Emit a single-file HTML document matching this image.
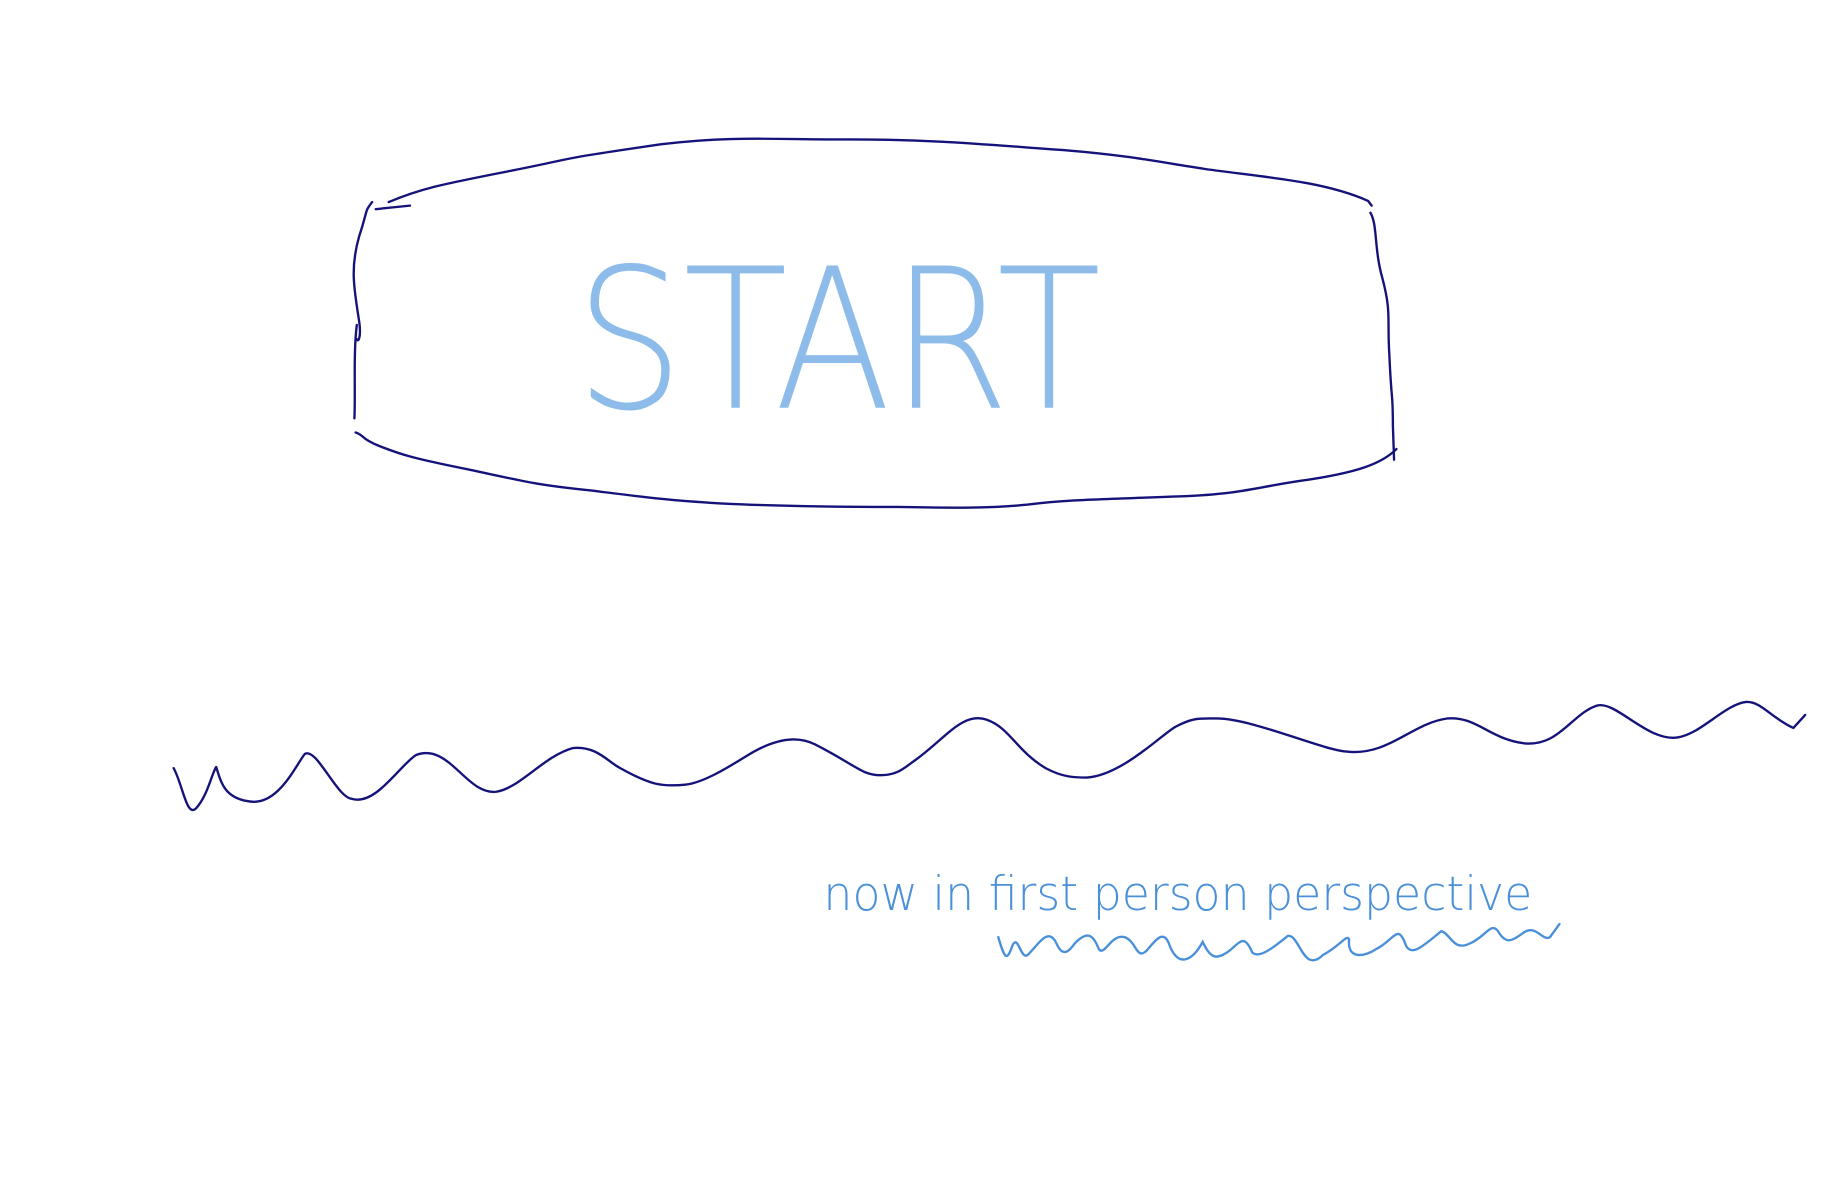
<!DOCTYPE html>
<html><head><meta charset="utf-8"><style>
html,body{margin:0;padding:0;background:#fff;width:1843px;height:1177px;overflow:hidden}
svg{display:block}
</style></head><body>
<svg width="1843" height="1177" viewBox="0 0 1560 996" preserveAspectRatio="none" xmlns="http://www.w3.org/2000/svg">
<g fill="none" stroke="#15137a" stroke-width="2" stroke-linecap="round" stroke-linejoin="round">
<path d="M329,171 C360,158 380,155 440,143 C490,133 470,135 560,122 C620,115 650,118 720,118 C790,118 830,122 900,127 C960,132 980,137 1020,143 C1070,150 1120,153 1158,170 L1161,174"/>
<path d="M318,177 L347,174"/>
<path d="M315,171 C308,180 312,176 304,200 C296,228 300,245 304,272 C306,286 303,290 302,287"/>
<path d="M302,275 C299,300 301,330 300,354"/>
<path d="M1160,180 C1166,190 1163,210 1170,235 C1178,265 1174,270 1176,300 C1178,345 1179,330 1179,360 L1180,389"/>
<path d="M1182,380 C1170,392 1150,400 1100,407 C1060,413 1050,418 1000,420 C920,423 900,423 870,427 C840,430 810,430 760,429 C690,429 650,428 610,426 C560,423 540,420 500,415 C460,411 450,409 400,398 C350,388 340,385 320,377 C305,371 308,368 301,366"/>
<path d="M147,650 C155,665 158,692 166,684 C176,673 179,655 183,649 C187,662 190,675 210,678 C235,683 250,648 258,638 C268,632 285,675 298,676 C318,682 338,648 352,639 C380,628 395,673 420,670 C440,667 460,640 485,633 C505,631 515,645 525,650 C550,664 560,666 580,664 C600,662 630,640 640,635 C665,622 680,625 690,630 C725,648 730,656 745,656 C760,656 765,650 775,643 C800,625 815,602 835,609 C855,616 860,635 885,650 C900,658 910,658 920,658 C950,656 985,620 995,615 C1010,607 1015,608 1030,608 C1060,608 1120,635 1140,636 C1175,640 1195,612 1225,608 C1250,606 1260,625 1290,629 C1320,632 1330,604 1352,597 C1368,593 1395,628 1420,624 C1440,621 1460,596 1478,594 C1490,593 1500,608 1518,616 L1528,605"/>
</g>
<g font-family="'DejaVu Sans','Liberation Sans',sans-serif">
<text x="487" y="345" font-size="165" font-weight="200" fill="#8dbbea" textLength="445" lengthAdjust="spacingAndGlyphs">START</text>
<text x="697" y="770" font-size="40" font-weight="200" fill="#4a90d9" textLength="600" lengthAdjust="spacingAndGlyphs">now in first person perspective</text>
</g>
<path fill="none" stroke="#4a90d9" stroke-width="2" stroke-linecap="round" d="M845,793 C850,810 852,815 857,800 C862,790 864,813 870,808 C880,798 888,783 895,800 C900,810 905,805 910,798 C920,788 925,790 930,803 C935,810 940,790 952,793 C962,797 962,812 970,805 C978,796 985,785 990,800 C998,820 1010,812 1018,797 C1025,812 1030,812 1040,805 C1050,797 1053,790 1060,806 C1066,812 1080,800 1090,792 C1100,790 1103,825 1120,808 C1135,800 1140,790 1142,795 C1140,812 1155,810 1165,803 C1180,796 1183,780 1190,800 C1195,810 1205,800 1220,788 C1228,790 1230,806 1245,798 C1258,792 1262,780 1268,788 C1275,800 1280,796 1290,789 C1300,782 1306,797 1312,793 L1320,782"/>
</svg>
</body></html>
